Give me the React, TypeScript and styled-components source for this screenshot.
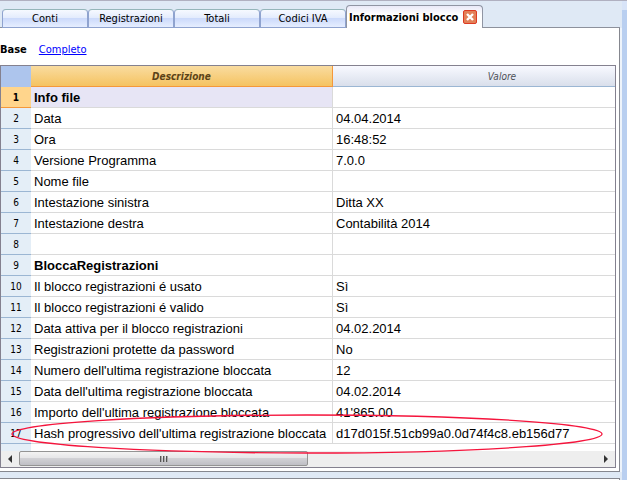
import React from "react";
import styled, { createGlobalStyle, css } from "styled-components";

const GlobalStyle = createGlobalStyle`
  *, *::before, *::after { box-sizing: border-box; }
  body {
    margin: 0;
    background: #dfe9f5;
    color: #000;
    font-family: "DejaVu Sans Condensed", "DejaVu Sans", sans-serif;
    font-size: 11px;
  }
`;

const Window = styled.div`
  display: flex;
  height: 100vh;
  overflow: hidden;
  border-top: 1px solid #b0b0c0;
`;

const Main = styled.div`
  flex: 1;
  min-width: 0;
  display: flex;
  flex-direction: column;
`;

const Gutter = styled.div`
  width: 5px;
  background: #b9cff0;
  border-top: 9px solid #d8e4f8;
`;

const TabBar = styled.div`
  display: flex;
  align-items: flex-end;
  height: 27px;
  padding-left: 2px;
  margin-right: 2px;
  background: #dfe9f5;
  box-shadow: inset 0 -1px 0 #8d919c;
`;

const Tab = styled.button<{ $active?: boolean }>`
  display: flex;
  align-items: center;
  justify-content: center;
  width: 86px;
  height: 19px;
  padding: 0;
  border: 1px solid #8fa3cf;
  border-top-color: #94b5b9;
  border-radius: 4px 4px 0 0;
  background: linear-gradient(#f6f9ff 0%, #e4ecfd 45%, #ccdafb 50%, #e6eeff 100%);
  color: #000;
  font: inherit;
  white-space: nowrap;
  ${(p) =>
    p.$active &&
    css`
      width: 137px;
      height: 23px;
      padding: 0 4px 0 2px;
      gap: 5px;
      justify-content: flex-start;
      border-color: #9095a3;
      border-bottom: 0;
      background: linear-gradient(#e9e9f8 0%, #fff 40%);
      font-weight: bold;
    `}
`;

const Panel = styled.section`
  display: flex;
  flex-direction: column;
  flex: 1;
  min-width: 0;
  margin-right: 2px;
  padding: 0 3px 3px 0;
  border: solid #85878f;
  border-width: 0 1px 1px 0;
  background: #fff;
  box-shadow: 2px 0 0 #eef4fb;
`;

const Views = styled.nav`
  display: flex;
  align-items: center;
  gap: 12px;
  height: 37px;
  padding-top: 6px;
`;

const ViewLink = styled.a`
  color: #0000ff;
  text-decoration: underline;
`;

const Grid = styled.div`
  position: relative;
  display: flex;
  flex: 1;
  flex-direction: column;
  justify-content: space-between;
  border: 1px solid #84818f;
  background: linear-gradient(90deg, #e4eef7 30px, #fff 30px);
`;

const Viewport = styled.div`
  overflow: hidden;
`;

const Table = styled.table`
  width: calc(100% + 56px);
  table-layout: fixed;
  border-collapse: separate;
  border-spacing: 0;
`;

const Corner = styled.th`
  width: 30px;
  height: 21px;
  padding: 0;
  background: #adc5ed;
`;

const Heading = styled.th<{ $selected?: boolean }>`
  width: ${(p) => (p.$selected ? "302px" : "auto")};
  padding: 0;
  border-bottom: 1px solid ${(p) => (p.$selected ? "#f5983a" : "#9bb6d3")};
  border-right: ${(p) => (p.$selected ? "1px solid #f5983a" : "0")};
  background: ${(p) =>
    p.$selected
      ? "linear-gradient(#f9dca0, #f5c361)"
      : "linear-gradient(#f8f9ff, #d9dfeb)"};
  color: ${(p) => (p.$selected ? "#5b4318" : "#4c4f56")};
  font-size: 10px;
  font-weight: ${(p) => (p.$selected ? "bold" : "normal")};
  font-style: italic;
`;

const RowNumber = styled.th<{ $selected?: boolean }>`
  height: 21px;
  padding: 0;
  border-bottom: 1px solid ${(p) => (p.$selected ? "#f5983a" : "#9bb6d3")};
  background: ${(p) => (p.$selected ? "#ffd58c" : "#e4eef7")};
  font-size: 10px;
  font-weight: ${(p) => (p.$selected ? "bold" : "normal")};
`;

const Cell = styled.td<{ $title?: boolean; $selected?: boolean; $edge?: boolean }>`
  height: 21px;
  padding: 2px 3px 0;
  border-bottom: 1px solid #dadada;
  border-right: ${(p) => (p.$edge ? "1px solid #dadada" : "0")};
  background: ${(p) => (p.$selected ? "#e7e5f5" : "#fff")};
  font-family: "Liberation Sans", Arial, sans-serif;
  font-size: 13px;
  font-weight: ${(p) => (p.$title ? "bold" : "normal")};
  line-height: 16px;
  white-space: nowrap;
`;

const Scrollbar = styled.div`
  display: flex;
  height: 16px;
  background: #eeeeee;
`;

const ScrollButton = styled.button`
  display: flex;
  align-items: center;
  justify-content: center;
  width: 18px;
  padding: 0;
  border: 0;
  background: transparent;
`;

const Track = styled.div`
  flex: 1;
`;

const Thumb = styled.div`
  display: flex;
  align-items: center;
  justify-content: center;
  width: 50%;
  height: 15px;
  border: 1px solid #949494;
  border-radius: 2px;
  background: linear-gradient(#f3f3f3 0%, #e6e6e8 45%, #d1d1d5 50%, #bfbfc5 100%);
`;

const Highlight = styled.svg`
  position: absolute;
  left: 10px;
  bottom: 13px;
  width: calc(100% - 22px);
  height: 40px;
  pointer-events: none;
`;

const LowerPanel = styled.div`
  height: 2px;
  margin: 6px 2px 0 0;
  border: solid #85878f;
  border-width: 1px 1px 0 0;
  background: #fff;
`;

const CloseIcon = () => (
  <svg width="14" height="14" viewBox="0 0 14 14" aria-hidden="true">
    <rect x=".5" y=".5" width="13" height="13" rx="1.5" fill="#e38058" stroke="#dd3a22" />
    <path d="M4 4l6 6M10 4l-6 6" stroke="#fff" strokeWidth="2.4" />
  </svg>
);

type Row = { name: string; value: string; title?: boolean };

const rows: Row[] = [
  { name: "Info file", value: "", title: true },
  { name: "Data", value: "04.04.2014" },
  { name: "Ora", value: "16:48:52" },
  { name: "Versione Programma", value: "7.0.0" },
  { name: "Nome file", value: "" },
  { name: "Intestazione sinistra", value: "Ditta XX" },
  { name: "Intestazione destra", value: "Contabilità 2014" },
  { name: "", value: "" },
  { name: "BloccaRegistrazioni", value: "", title: true },
  { name: "Il blocco registrazioni é usato", value: "Sì" },
  { name: "Il blocco registrazioni é valido", value: "Sì" },
  { name: "Data attiva per il blocco registrazioni", value: "04.02.2014" },
  { name: "Registrazioni protette da password", value: "No" },
  { name: "Numero dell'ultima registrazione bloccata", value: "12" },
  { name: "Data dell'ultima registrazione bloccata", value: "04.02.2014" },
  { name: "Importo dell'ultima registrazione bloccata", value: "41'865.00" },
  {
    name: "Hash progressivo dell'ultima registrazione bloccata",
    value: "d17d015f.51cb99a0.0d74f4c8.eb156d77",
  },
];

const tabs = ["Conti", "Registrazioni", "Totali", "Codici IVA"];

export default function App() {
  return (
    <>
      <GlobalStyle />
      <Window>
        <Main>
          <TabBar role="tablist">
            {tabs.map((tab) => (
              <Tab key={tab} role="tab" aria-selected={false}>
                {tab}
              </Tab>
            ))}
            <Tab $active role="tab" aria-selected={true}>
              Informazioni blocco
              <CloseIcon />
            </Tab>
          </TabBar>
          <Panel>
            <Views>
              <b>Base</b>
              <ViewLink href="#completo">Completo</ViewLink>
            </Views>
            <Grid>
              <Viewport>
                <Table>
                  <thead>
                    <tr>
                      <Corner aria-label="Riga" />
                      <Heading $selected scope="col">
                        Descrizione
                      </Heading>
                      <Heading scope="col">Valore</Heading>
                    </tr>
                  </thead>
                  <tbody>
                    {rows.map((row, i) => (
                      <tr key={i}>
                        <RowNumber scope="row" $selected={i === 0}>
                          {i + 1}
                        </RowNumber>
                        <Cell $edge $title={row.title} $selected={i === 0}>
                          {row.name}
                        </Cell>
                        <Cell>{row.value}</Cell>
                      </tr>
                    ))}
                  </tbody>
                </Table>
              </Viewport>
              <Scrollbar>
                <ScrollButton aria-label="Scorri a sinistra">
                  <svg width="4" height="8" viewBox="0 0 4 8">
                    <path d="M4 0v8L0 4z" fill="#333" />
                  </svg>
                </ScrollButton>
                <Track>
                  <Thumb>
                    <svg width="8" height="6" viewBox="0 0 8 6" shapeRendering="crispEdges">
                      <path d="M.5 0v6M3.5 0v6M6.5 0v6" stroke="#555" />
                      <path d="M1.5 0v6M4.5 0v6M7.5 0v6" stroke="#aaa" />
                    </svg>
                  </Thumb>
                </Track>
                <ScrollButton aria-label="Scorri a destra">
                  <svg width="4" height="8" viewBox="0 0 4 8">
                    <path d="M0 0v8l4-4z" fill="#333" />
                  </svg>
                </ScrollButton>
              </Scrollbar>
              <Highlight viewBox="0 0 593 40" preserveAspectRatio="none" aria-hidden="true">
                <ellipse cx="296.5" cy="20" rx="295.5" ry="19" fill="none" stroke="#f5143c" strokeWidth="1.3" />
              </Highlight>
            </Grid>
          </Panel>
          <LowerPanel />
        </Main>
        <Gutter />
      </Window>
    </>
  );
}
